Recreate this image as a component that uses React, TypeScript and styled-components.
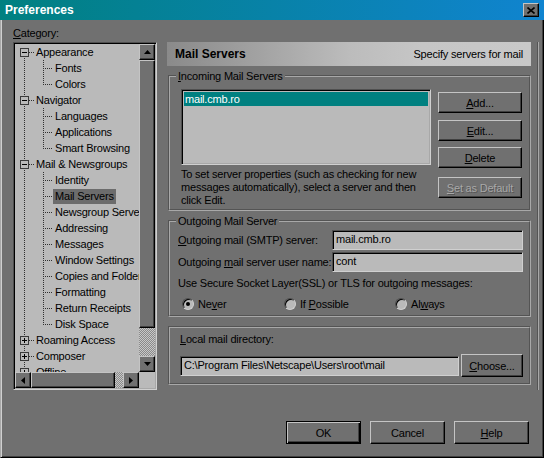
import React from 'react';
import styled, { createGlobalStyle, css } from 'styled-components';

const FACE = '#707070';
const FIELD = '#bababa';
const LIGHT = '#c4c4c4';
const SHADOW = '#404040';

const GlobalStyle = createGlobalStyle`
  html, body {
    margin: 0;
    padding: 0;
    background: ${FACE};
  }
  body {
    font-family: "Liberation Sans", Arial, sans-serif;
    font-size: 11px;
    letter-spacing: -0.2px;
    color: #000;
  }
  * {
    box-sizing: border-box;
  }
`;

const Window = styled.div`
  width: 544px;
  height: 458px;
  display: flex;
  flex-direction: column;
  background: ${FACE};
`;

const TitleBar = styled.div`
  height: 20px;
  flex: none;
  display: flex;
  align-items: center;
  justify-content: space-between;
  padding: 0 5px;
  background: linear-gradient(90deg, #008080, #1084d0);
`;

const TitleText = styled.span`
  color: #fff;
  font-weight: bold;
  font-size: 12px;
  letter-spacing: 0;
`;

const CloseButton = styled.div`
  width: 16px;
  height: 14px;
  display: flex;
  align-items: center;
  justify-content: center;
  background: ${FACE};
  border: 1px solid;
  border-color: ${LIGHT} #000 #000 ${LIGHT};
  box-shadow: inset -1px -1px ${SHADOW};
`;

const Body = styled.div`
  flex: 1;
  display: flex;
  flex-direction: column;
  border-style: solid;
  border-width: 0 1px 1px 1px;
  border-color: #a8a8a8 #000 #000 #a8a8a8;
  box-shadow: inset 1px 0 #d0d0d0, inset -1px -1px ${SHADOW};
  padding: 7px 4px 13px 12px;
`;

const Main = styled.div`
  display: grid;
  grid-template-columns: 144px 372px;
  grid-template-rows: 13px 348px;
  column-gap: 10px;
  row-gap: 2px;
`;

const CategoryLabel = styled.div`
  grid-column: 1;
  grid-row: 1;
  line-height: 13px;
`;

/* ---------- tree ---------- */

const TreeBox = styled.div`
  grid-column: 1;
  grid-row: 2;
  border: 1px solid;
  border-color: #505050 #d0d0d0 #d0d0d0 #505050;
  box-shadow: inset 1px 1px #000, inset -1px -1px #a8a8a8;
  padding: 1px;
  display: grid;
  grid-template-columns: 1fr 16px;
  grid-template-rows: 1fr 16px;
  min-height: 0;
`;

const TreeView = styled.div`
  background: ${FIELD};
  overflow: hidden;
  min-width: 0;
`;

const TreeRow = styled.div`
  height: 16px;
  display: flex;
  align-items: center;
  white-space: nowrap;
  svg {
    flex: none;
  }
`;

const TreeLabel = styled.span<{ $selected?: boolean }>`
  padding: 0 2px;
  line-height: 15px;
  background: ${(p) => (p.$selected ? '#6c6c6c' : 'transparent')};
`;

const Corner = styled.div`
  background: ${FIELD};
`;

const VScroll = styled.div`
  display: flex;
  flex-direction: column;
`;

const HScroll = styled.div`
  display: flex;
`;

const raised = css`
  background: ${FACE};
  border: 1px solid;
  border-color: ${LIGHT} #000 #000 ${LIGHT};
  box-shadow: inset -1px -1px ${SHADOW};
`;

const ScrollButton = styled.div`
  ${raised};
  width: 16px;
  height: 16px;
  flex: none;
  display: flex;
  align-items: center;
  justify-content: center;
`;

const Thumb = styled.div<{ $size: number; $horizontal?: boolean }>`
  ${raised};
  flex: none;
  ${(p) => (p.$horizontal ? `width: ${p.$size}px;` : `height: ${p.$size}px;`)}
`;

const Track = styled.div`
  flex: 1;
  background: repeating-conic-gradient(#c8c8c8 0 25%, #8a8a8a 0 50%) 0 0 / 2px 2px;
`;

/* ---------- right panel ---------- */

const RightPanel = styled.div`
  grid-column: 2;
  grid-row: 2;
  padding-right: 6px;
  border-right: 2px groove #a8a8a8;
  display: flex;
  flex-direction: column;
`;

const Header = styled.div`
  height: 24px;
  flex: none;
  display: flex;
  align-items: center;
  justify-content: space-between;
  padding: 0 8px;
  background: linear-gradient(90deg, #8a8a8a 0%, #a2a2a2 25%, #bcbcbc 50%, #c6c6c6 70%, #c8c8c8 100%);
`;

const HeaderTitle = styled.span`
  font-weight: bold;
  font-size: 12px;
  letter-spacing: 0;
`;

const Group = styled.fieldset<{ $mt: number; $pt: number; $pb: number }>`
  margin: ${(p) => p.$mt}px 0 0 1px;
  padding: ${(p) => p.$pt}px 6px ${(p) => p.$pb}px 6px;
  border: 2px groove #a8a8a8;
  min-width: 0;
`;

const Legend = styled.legend`
  padding: 0 2px;
  margin: 0;
  line-height: 14px;
`;

const IncomingBody = styled.div`
  display: grid;
  grid-template-columns: 250px 84px;
  column-gap: 7px;
  padding: 0 1px 0 5px;
`;

const ListBox = styled.div`
  height: 76px;
  background: ${FIELD};
  border: 1px solid;
  border-color: #505050 #d0d0d0 #d0d0d0 #505050;
  box-shadow: inset 1px 1px #000, inset -1px -1px #a8a8a8;
  padding: 2px;
`;

const ListItem = styled.div<{ $selected?: boolean }>`
  height: 14px;
  line-height: 14px;
  padding-left: 1px;
  color: ${(p) => (p.$selected ? '#fff' : '#000')};
  background: ${(p) => (p.$selected ? '#008080' : 'transparent')};
`;

const HelpText = styled.div`
  margin-top: 3px;
  line-height: 13px;
  white-space: nowrap;
`;

const ButtonColumn = styled.div`
  display: flex;
  flex-direction: column;
`;

const Button = styled.button<{ $w: number; $h: number; $mt?: number; $default?: boolean }>`
  ${raised};
  width: ${(p) => p.$w}px;
  height: ${(p) => p.$h}px;
  margin-top: ${(p) => p.$mt ?? 0}px;
  flex: none;
  padding: 0;
  font: inherit;
  letter-spacing: inherit;
  color: #000;
  cursor: default;
  ${(p) =>
    p.$default &&
    css`
      border-color: #000;
      box-shadow: inset 1px 1px ${LIGHT}, inset -1px -1px #000, inset -2px -2px ${SHADOW};
    `}
  &:disabled {
    color: #a8a8a8;
    text-shadow: 1px 1px 0 #555;
  }
`;

const OutgoingBody = styled.div`
  padding-left: 2px;
  display: flex;
  flex-direction: column;
`;

const FieldRow = styled.div<{ $mt?: number }>`
  display: grid;
  grid-template-columns: 154px 1fr;
  align-items: center;
  height: 20px;
  margin-top: ${(p) => p.$mt ?? 0}px;
  white-space: nowrap;
`;

const TextField = styled.div<{ $grow?: boolean }>`
  height: 20px;
  line-height: 17px;
  padding-left: 3px;
  background: ${FIELD};
  border: 1px solid;
  border-color: #505050 #d0d0d0 #d0d0d0 #505050;
  box-shadow: inset 1px 1px #000;
  white-space: nowrap;
  overflow: hidden;
  min-width: 0;
  flex: ${(p) => (p.$grow ? 1 : 'none')};
`;

const Note = styled.div<{ $mt: number }>`
  margin-top: ${(p) => p.$mt}px;
  line-height: 13px;
  white-space: nowrap;
`;

const RadioRow = styled.div`
  margin-top: 6px;
  height: 16px;
  display: grid;
  grid-template-columns: 102px 111px auto;
  align-items: center;
  padding-left: 4px;
`;

const RadioOption = styled.label`
  display: flex;
  align-items: center;
  gap: 4px;
`;

const RadioCircle = styled.span`
  width: 12px;
  height: 12px;
  border-radius: 50%;
  border: 1px solid;
  border-color: #4a4a4a #d0d0d0 #d0d0d0 #4a4a4a;
  box-shadow: inset 1px 1px #000;
  background: ${FIELD};
  display: flex;
  align-items: center;
  justify-content: center;
`;

const RadioDot = styled.span`
  width: 4px;
  height: 4px;
  border-radius: 50%;
  background: #000;
`;

const LocalBody = styled.div`
  padding-left: 4px;
  display: flex;
  flex-direction: column;
`;

const PathRow = styled.div`
  margin-top: 8px;
  display: flex;
  align-items: center;
  gap: 2px;
`;

const Footer = styled.div`
  margin-top: 31px;
  margin-right: 10px;
  display: flex;
  justify-content: flex-end;
  gap: 9px;
`;

/* ---------- data ---------- */

type Node = { label: string; open: boolean; children?: string[] };

const tree: Node[] = [
  { label: 'Appearance', open: true, children: ['Fonts', 'Colors'] },
  { label: 'Navigator', open: true, children: ['Languages', 'Applications', 'Smart Browsing'] },
  {
    label: 'Mail & Newsgroups',
    open: true,
    children: [
      'Identity',
      'Mail Servers',
      'Newsgroup Servers',
      'Addressing',
      'Messages',
      'Window Settings',
      'Copies and Folders',
      'Formatting',
      'Return Receipts',
      'Disk Space',
    ],
  },
  { label: 'Roaming Access', open: false },
  { label: 'Composer', open: false },
  { label: 'Offline', open: false },
];

const DOT = '#303030';

const RootGutter: React.FC<{ first: boolean; last: boolean; open: boolean }> = ({ first, last, open }) => (
  <svg width="19" height="16" shapeRendering="crispEdges">
    <g stroke={DOT} strokeDasharray="1 1">
      {!first && <line x1="9.5" y1="0" x2="9.5" y2="4" />}
      {!last && <line x1="9.5" y1="14" x2="9.5" y2="16" />}
      <line x1="14" y1="8.5" x2="19" y2="8.5" />
    </g>
    <rect x="5.5" y="4.5" width="8" height="8" fill="none" stroke="#3a3a3a" />
    <line x1="7" y1="8.5" x2="12" y2="8.5" stroke="#000" />
    {!open && <line x1="9.5" y1="6" x2="9.5" y2="11" stroke="#000" />}
  </svg>
);

const ChildGutter: React.FC<{ last: boolean }> = ({ last }) => (
  <svg width="38" height="16" shapeRendering="crispEdges">
    <g stroke={DOT} strokeDasharray="1 1">
      <line x1="9.5" y1="0" x2="9.5" y2="16" />
      <line x1="28.5" y1="0" x2="28.5" y2={last ? 9 : 16} />
      <line x1="30" y1="8.5" x2="38" y2="8.5" />
    </g>
  </svg>
);

const Arrow: React.FC<{ dir: 'up' | 'down' | 'left' | 'right' }> = ({ dir }) => {
  const pts = {
    up: '3.5,0 7,4 0,4',
    down: '0,0 7,0 3.5,4',
    left: '4,0 4,7 0,3.5',
    right: '0,0 4,3.5 0,7',
  }[dir];
  const vertical = dir === 'up' || dir === 'down';
  return (
    <svg width={vertical ? 7 : 4} height={vertical ? 4 : 7}>
      <polygon points={pts} fill="#000" />
    </svg>
  );
};

const Radio: React.FC<{ checked?: boolean; children: React.ReactNode }> = ({ checked, children }) => (
  <RadioOption>
    <RadioCircle>{checked && <RadioDot />}</RadioCircle>
    <span>{children}</span>
  </RadioOption>
);

export default function App() {
  return (
    <>
      <GlobalStyle />
      <Window>
        <TitleBar>
          <TitleText>Preferences</TitleText>
          <CloseButton>
            <svg width="8" height="7">
              <path d="M0.5 0.5 L7.5 6.5 M7.5 0.5 L0.5 6.5" stroke="#000" strokeWidth="1.6" />
            </svg>
          </CloseButton>
        </TitleBar>
        <Body>
          <Main>
            <CategoryLabel>
              <u>C</u>ategory:
            </CategoryLabel>
            <TreeBox>
              <TreeView>
                {tree.map((node, i) => (
                  <React.Fragment key={node.label}>
                    <TreeRow>
                      <RootGutter first={i === 0} last={i === tree.length - 1} open={node.open} />
                      <TreeLabel>{node.label}</TreeLabel>
                    </TreeRow>
                    {node.open &&
                      node.children?.map((child, j) => (
                        <TreeRow key={child}>
                          <ChildGutter last={j === (node.children?.length ?? 0) - 1} />
                          <TreeLabel $selected={child === 'Mail Servers'}>{child}</TreeLabel>
                        </TreeRow>
                      ))}
                  </React.Fragment>
                ))}
              </TreeView>
              <VScroll>
                <ScrollButton>
                  <Arrow dir="up" />
                </ScrollButton>
                <Thumb $size={268} />
                <Track />
                <ScrollButton>
                  <Arrow dir="down" />
                </ScrollButton>
              </VScroll>
              <HScroll>
                <ScrollButton>
                  <Arrow dir="left" />
                </ScrollButton>
                <Thumb $size={84} $horizontal />
                <Track />
                <ScrollButton>
                  <Arrow dir="right" />
                </ScrollButton>
              </HScroll>
              <Corner />
            </TreeBox>

            <RightPanel>
              <Header>
                <HeaderTitle>Mail Servers</HeaderTitle>
                <span>Specify servers for mail</span>
              </Header>

              <Group $mt={3} $pt={6} $pb={2}>
                <Legend>
                  <u>I</u>ncoming Mail Servers
                </Legend>
                <IncomingBody>
                  <div>
                    <ListBox>
                      <ListItem $selected>mail.cmb.ro</ListItem>
                    </ListBox>
                    <HelpText>
                      To set server properties (such as checking for new
                      <br />
                      messages automatically), select a server and then
                      <br />
                      click Edit.
                    </HelpText>
                  </div>
                  <ButtonColumn>
                    <Button $w={84} $h={21} $mt={3}>
                      <u>A</u>dd...
                    </Button>
                    <Button $w={84} $h={21} $mt={7}>
                      <u>E</u>dit...
                    </Button>
                    <Button $w={84} $h={21} $mt={6}>
                      <u>D</u>elete
                    </Button>
                    <Button $w={84} $h={21} $mt={9} disabled>
                      <u>S</u>et as Default
                    </Button>
                  </ButtonColumn>
                </IncomingBody>
              </Group>

              <Group $mt={3} $pt={2} $pb={3}>
                <Legend>Outgoing Mail Server</Legend>
                <OutgoingBody>
                  <FieldRow>
                    <span>
                      <u>O</u>utgoing mail (SMTP) server:
                    </span>
                    <TextField>mail.cmb.ro</TextField>
                  </FieldRow>
                  <FieldRow $mt={2}>
                    <span>
                      Outgoing <u>m</u>ail server user name:
                    </span>
                    <TextField>cont</TextField>
                  </FieldRow>
                  <Note $mt={5}>Use Secure Socket Layer(SSL) or TLS for outgoing messages:</Note>
                  <RadioRow>
                    <Radio checked>
                      Ne<u>v</u>er
                    </Radio>
                    <Radio>
                      If <u>P</u>ossible
                    </Radio>
                    <Radio>
                      Al<u>w</u>ays
                    </Radio>
                  </RadioRow>
                </OutgoingBody>
              </Group>

              <Group $mt={9} $pt={5} $pb={6}>
                <LocalBody>
                  <Note $mt={0}>
                    <u>L</u>ocal mail directory:
                  </Note>
                  <PathRow>
                    <TextField $grow>C:\Program Files\Netscape\Users\root\mail</TextField>
                    <Button $w={62} $h={23}>
                      <u>C</u>hoose...
                    </Button>
                  </PathRow>
                </LocalBody>
              </Group>
            </RightPanel>
          </Main>

          <Footer>
            <Button $w={75} $h={23} $default>
              OK
            </Button>
            <Button $w={75} $h={23}>
              Cancel
            </Button>
            <Button $w={75} $h={23}>
              <u>H</u>elp
            </Button>
          </Footer>
        </Body>
      </Window>
    </>
  );
}
